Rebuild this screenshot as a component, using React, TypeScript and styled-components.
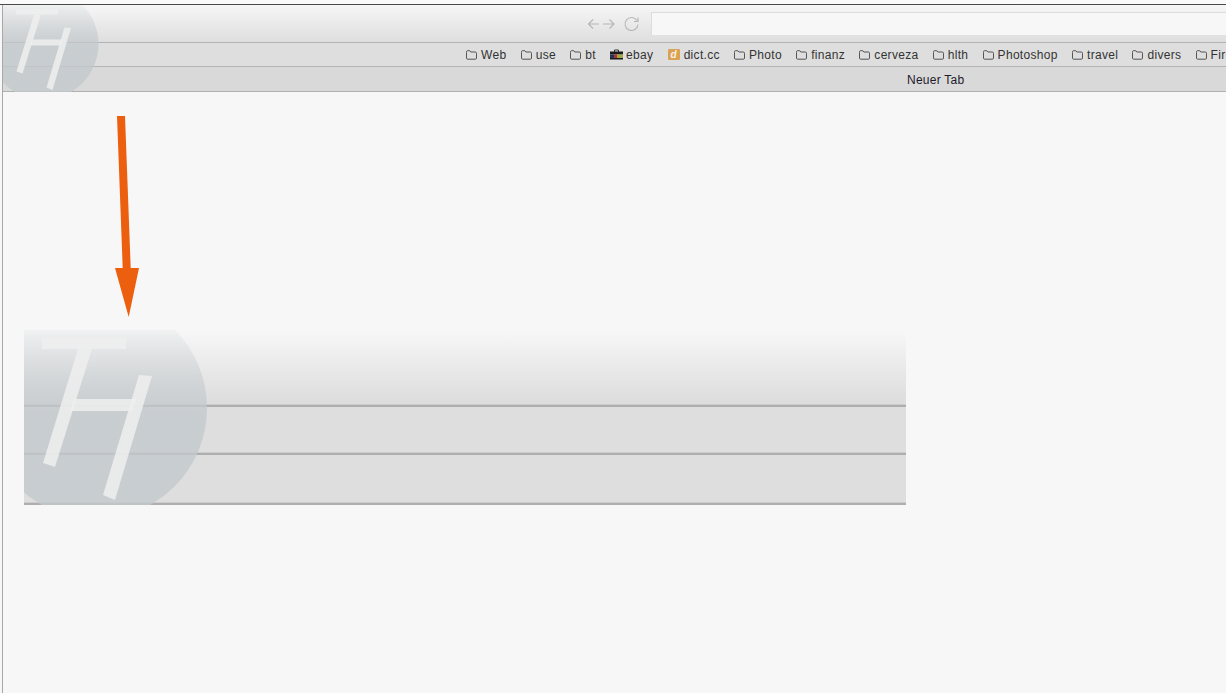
import styled, { createGlobalStyle } from "styled-components";

const bookmarks = ["Web", "use", "bt", "ebay", "dict.cc", "Photo", "finanz", "cerveza", "hlth", "Photoshop", "travel", "divers", "Fire"];

const GlobalStyle = createGlobalStyle`
  html, body {
    margin: 0;
    padding: 0;
    background: #f7f7f7;
  }
`;

// the TH mark, drawn in banner coordinates and scaled down for the small one
const Logo = ({ id, small }: { id: string; small?: boolean }) => (
  <LogoMark $small={small} viewBox="0 0 183 175">
    <defs>
      <linearGradient id={id} gradientUnits="userSpaceOnUse" x1="0" y1="-4" x2="0" y2="84">
        <stop offset="0" stopColor="#c3c9cd" stopOpacity="0.1" />
        <stop offset="1" stopColor="#c3c9cd" stopOpacity="0.8" />
      </linearGradient>
    </defs>
    <circle cx="72" cy="78" r="111" fill={`url(#${id})`} />
    <LogoStroke points="18,8 102,8 102,19 18,19" />
    <LogoStroke points="54,19 68,19 31,137 19,133" />
    <LogoStroke points="50,69 112,69 108,81 46,81" />
    <LogoStroke points="115,45 128,46 91,170 79,165" />
  </LogoMark>
);

const BookmarkIcon = ({ name }: { name: string }) => {
  if (name === "ebay") {
    return (
      <IconSvg width="13" height="11" viewBox="0 0 13 11">
        <path d="M4.500 3V1h4v2" fill="none" stroke="#333" />
        <rect x="0" y="2.500" width="13" height="3" fill="#1b1b1b" />
        <rect x="0" y="5.500" width="4" height="3.500" fill="#27325a" />
        <rect x="4" y="5.500" width="3" height="3.500" fill="#a8362e" />
        <rect x="7" y="5.500" width="6" height="3.500" fill="#a3a845" />
        <rect x="0" y="9" width="13" height="1.500" fill="#1b1b1b" />
      </IconSvg>
    );
  }
  if (name === "dict.cc") {
    return <DictIcon>d</DictIcon>;
  }
  return (
    <IconSvg width="11" height="10" viewBox="0 0 11 10">
      <FolderPath d="M.5 2.500V1.800C.5 1 1 .7 1.500.7h2.300l1 1.300h4.500c.8 0 1.200.5 1.200 1.200v4.800c0 .7-.4 1.200-1.200 1.200H1.700C1 9.200.5 8.700.5 8z" />
    </IconSvg>
  );
};

const App = () => {
  return (
    <>
      <GlobalStyle />
      <Page>
        <TopEdge />
        <Window>
          <Frame>
            <Logo id="discSmall" small />
            <Toolbar>
              <NavIcons width="54" height="16" viewBox="0 0 54 16">
                <path d="M14 8H3.500M8 3.500L3.500 8 8 12.500M18 8h11M24.500 3.500L29 8l-4.500 4.500" />
                <path d="M52 4.500A6.500 6.500 0 1 0 53 8.500M53 1.500v4h-4" />
              </NavIcons>
              <UrlField />
            </Toolbar>
            <BookmarkBar>
              {bookmarks.map((name) => (
                <Bookmark key={name} $tight={name === "ebay"}>
                  <BookmarkIcon name={name} />
                  {name}
                </Bookmark>
              ))}
            </BookmarkBar>
            <TabBar>Neuer Tab</TabBar>
          </Frame>

          <Arrow width="26" height="202" viewBox="0 0 26 202">
            <path d="M2 0h8l5.700 152H24L13.700 201 0 152h7.700z" />
          </Arrow>

          <Banner>
            <Logo id="discBanner" />
            <BannerRow $height={77} $fade />
            <BannerRow $height={48} />
            <BannerRow $height={50} />
          </Banner>
        </Window>
      </Page>
    </>
  );
};

export default App;

const Page = styled.div`
  width: 1226px;
  height: 693px;
  overflow: hidden;
  background: #f7f7f7;
  font-family: "Liberation Sans", Arial, sans-serif;
`;

const TopEdge = styled.div`
  height: 4px;
  background: #fafafa;
  border-bottom: 1px solid #4a4a4a;
`;

const Window = styled.div`
  height: 688px;
  margin-left: 2px;
  border-left: 1px solid #a8a8a8;
`;

const Frame = styled.div`
  position: relative;
  overflow: hidden;
  height: 87px;
`;

const LogoMark = styled.svg<{ $small?: boolean }>`
  position: absolute;
  top: 0;
  left: ${(p) => (p.$small ? 4 : 0)}px;
  width: ${(p) => (p.$small ? 91.5 : 183)}px;
  height: ${(p) => (p.$small ? 87.5 : 175)}px;
  overflow: visible;
`;

const LogoStroke = styled.polygon`
  fill: #eeeeee;
  fill-opacity: 0.85;
`;

const Toolbar = styled.div`
  height: 37px;
  padding-left: 582px;
  display: flex;
  align-items: center;
  background: linear-gradient(#f6f6f6, #dedede);
  border-bottom: 1px solid #b4b4b4;
`;

const NavIcons = styled.svg`
  fill: none;
  stroke: #b5b5b5;
  stroke-width: 1.1;
  margin-right: 12px;
`;

const UrlField = styled.div`
  flex: 1;
  height: 22px;
  background: #f7f7f7;
  border-top: 1px solid #dcdcdc;
  border-left: 1px solid #dcdcdc;
`;

const BookmarkBar = styled.div`
  height: 23px;
  padding-left: 463px;
  display: flex;
  align-items: center;
  gap: 14.3px;
  overflow: hidden;
  background: #dedede;
  border-bottom: 1px solid #b4b4b4;
`;

const Bookmark = styled.div<{ $tight?: boolean }>`
  flex: none;
  display: flex;
  align-items: center;
  gap: ${(p) => (p.$tight ? 3 : 4)}px;
  font-size: 12px;
  letter-spacing: 0.3px;
  color: #333333;
`;

const IconSvg = styled.svg`
  flex: none;
`;

const FolderPath = styled.path`
  fill: none;
  stroke: #555555;
  stroke-width: 1;
`;

const DictIcon = styled.span`
  width: 12px;
  height: 11px;
  border-radius: 1px;
  background: #dca253;
  color: #f6f1e6;
  font-size: 10px;
  font-weight: bold;
  font-style: italic;
  line-height: 11px;
  text-align: center;
`;

const TabBar = styled.div`
  box-sizing: border-box;
  height: 25px;
  padding: 1px 0 0 904px;
  display: flex;
  align-items: center;
  font-size: 12px;
  letter-spacing: 0.25px;
  color: #1f1a2a;
  background: #d9d9d9;
  border-bottom: 1px solid #b0b0b0;
`;

const Arrow = styled.svg`
  display: block;
  margin: 24px 0 12px 112px;
  fill: #ec5f0e;
`;

const Banner = styled.div`
  position: relative;
  overflow: hidden;
  width: 882px;
  height: 175px;
  margin-left: 21px;
`;

const BannerRow = styled.div<{ $height: number; $fade?: boolean }>`
  box-sizing: border-box;
  height: ${(p) => p.$height}px;
  background: ${(p) => (p.$fade ? "linear-gradient(#f7f7f7, #dcdcdc)" : "#dedede")};
  border-bottom: 2px solid #aeaeae;
  box-shadow: inset 0 -1px 0 #cdcdcd;
`;
